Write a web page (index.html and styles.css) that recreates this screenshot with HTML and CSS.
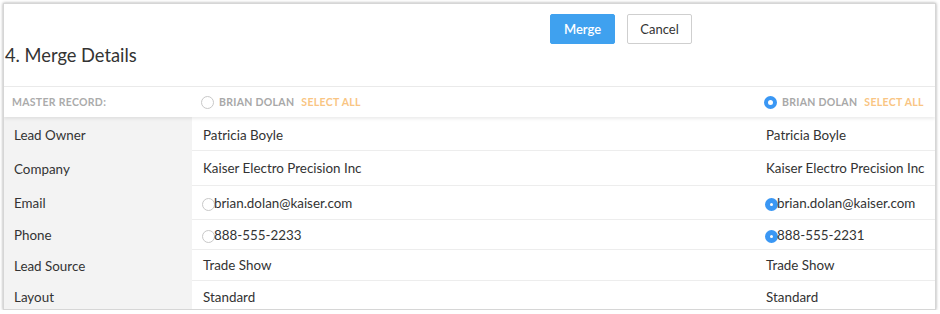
FILE: index.html
```html
<!DOCTYPE html>
<html lang="en">
<head>
  <meta charset="UTF-8">
  <title>Merge Details</title>
  <link rel="stylesheet" href="styles.css">
</head>
<body>

  <div class="panel">
    <div class="header">
      <div class="actions">
        <button class="btn btn-primary">Merge</button>
        <button class="btn">Cancel</button>
      </div>
      <h2>4. Merge Details</h2>
    </div>

    <div class="master-row">
      <div class="label-cell">Master Record:</div>
      <div class="col-a">
        <span class="radio"></span>
        <span class="name">Brian Dolan</span>
        <span class="select-all">Select All</span>
      </div>
      <div class="col-b">
        <span class="radio checked"></span>
        <span class="name">Brian Dolan</span>
        <span class="select-all">Select All</span>
      </div>
    </div>

    <div class="rows">
      <div class="row r1">
        <div class="field">Lead Owner</div>
        <div class="val col-a">Patricia Boyle</div>
        <div class="val col-b">Patricia Boyle</div>
      </div>
      <div class="row r2">
        <div class="field">Company</div>
        <div class="val col-a">Kaiser Electro Precision Inc</div>
        <div class="val col-b">Kaiser Electro Precision Inc</div>
      </div>
      <div class="row r3">
        <div class="field">Email</div>
        <div class="val col-a pick"><span class="radio small"></span>brian.dolan@kaiser.com</div>
        <div class="val col-b pick"><span class="radio small checked"></span>brian.dolan@kaiser.com</div>
      </div>
      <div class="row r4">
        <div class="field">Phone</div>
        <div class="val col-a pick"><span class="radio small"></span>888-555-2233</div>
        <div class="val col-b pick"><span class="radio small checked"></span>888-555-2231</div>
      </div>
      <div class="row r5">
        <div class="field">Lead Source</div>
        <div class="val col-a">Trade Show</div>
        <div class="val col-b">Trade Show</div>
      </div>
      <div class="row r6">
        <div class="field">Layout</div>
        <div class="val col-a">Standard</div>
        <div class="val col-b">Standard</div>
      </div>
    </div>
  </div>

</body>
</html>
```

FILE: styles.css
```css
body {
  margin: 0;
  background: #fff;
  font-family: Lato, "Open Sans", sans-serif;
  color: #333;
}
.panel {
  margin: 3px 4px 0 3px;
  height: 305px;
  border: 1px solid #d6d6d6;
  box-shadow: 0 0 3px rgba(0, 0, 0, 0.35);
  background: #fff;
  overflow: hidden;
}
.header {
  height: 82px;
  border-bottom: 1px solid #ebebeb;
}
.actions {
  display: flex;
  gap: 12px;
  padding: 10px 0 0 546px;
}
.btn {
  width: 65px;
  height: 30px;
  border: 1px solid #cfcfcf;
  border-radius: 2px;
  background: #fff;
  color: #333;
  font-family: inherit;
  font-size: 13px;
  cursor: pointer;
}
.btn-primary {
  background: #3fa1ef;
  border-color: #3fa1ef;
  color: #fff;
  font-weight: 600;
}
h2 {
  margin: 0 0 0 1px;
  font-size: 18.3px;
  font-weight: normal;
  color: #333;
}

.master-row {
  display: grid;
  grid-template-columns: 188px 563px 1fr;
  height: 30px;
  align-items: center;
  font-size: 10.5px;
  font-weight: bold;
  text-transform: uppercase;
  letter-spacing: 0.3px;
  position: relative;
  z-index: 1;
  box-shadow: 0 2px 3px rgba(0, 0, 0, 0.08);
}
.master-row .label-cell {
  padding-left: 8px;
  color: #ababab;
}
.master-row .col-a,
.master-row .col-b {
  display: flex;
  align-items: center;
  padding-left: 9px;
}
.name {
  color: #a8a8a8;
  margin-left: 5px;
}
.select-all {
  color: #f9c583;
  margin-left: 7px;
}

.radio {
  display: inline-block;
  box-sizing: border-box;
  width: 13px;
  height: 13px;
  border: 1px solid #c8c8c8;
  border-radius: 50%;
  background: #fff;
  flex: none;
}
.radio.checked {
  border: 4px solid #3a97f4;
  background: #fff;
}
.radio.small.checked {
  border-width: 5px;
}

.row {
  display: grid;
  grid-template-columns: 188px 563px 1fr;
  font-size: 13.4px;
}
.r1 { height: 34px; }
.r1 .val { padding-top: 2px; box-sizing: border-box; }
.r2 { height: 35px; }
.r3 { height: 34px; }
.r4 { height: 30px; }
.r5 { height: 31px; }
.r6 { height: 32px; }
.field {
  background: #f3f3f3;
  padding-left: 10px;
  display: flex;
  align-items: center;
}
.r1 .field { padding-top: 2px; }
.val {
  display: flex;
  align-items: center;
  padding-left: 11px;
  border-bottom: 1px solid #ededed;
}
.val.pick {
  padding-left: 10px;
}
.val.pick .radio {
  margin-top: 4px;
  margin-right: -1px;
}
.r6 .val {
  border-bottom: none;
}
```
